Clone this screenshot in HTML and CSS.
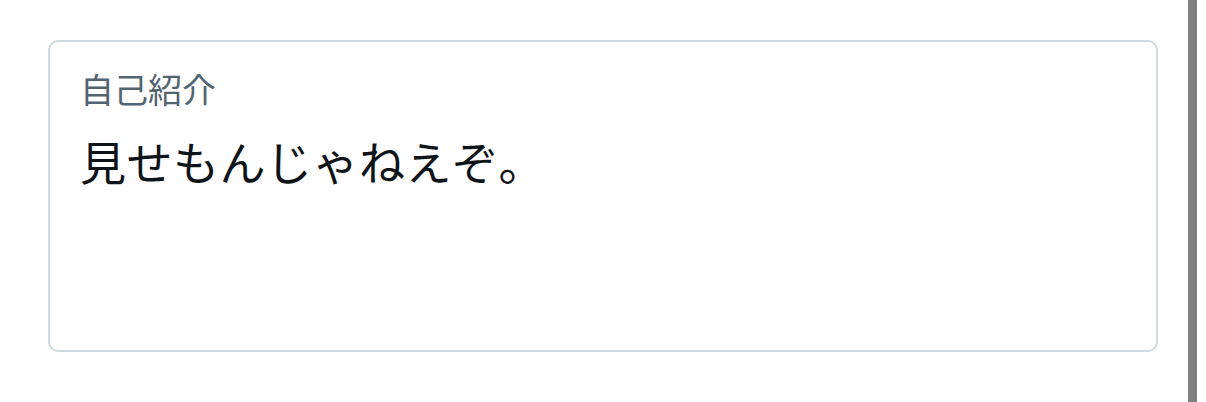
FILE: index.html
```html
<!DOCTYPE html>
<html lang="ja">
<head>
    <meta charset="UTF-8">
    <meta name="viewport" content="width=device-width, initial-scale=1.0">
    <title>プロフィール編集</title>
    <link rel="stylesheet" href="styles.css">
</head>
<body>
    <div class="page">
        <main class="content">
            <label class="field">
                <span class="field-label">自己紹介</span>
                <span class="field-value">見せもんじゃねえぞ。</span>
            </label>
        </main>
        <div class="scrollbar"></div>
    </div>
</body>
</html>
```

FILE: styles.css
```css
body {
    font-family: 'Noto Sans CJK JP', 'Noto Sans', sans-serif;
    margin: 0;
    padding: 0;
    background-color: #fff;
    color: #0f1419;
}

.page {
    display: flex;
    height: 402px;
}

.content {
    flex: 1;
    padding: 40px 30px 0 48px;
}

.field {
    display: flex;
    flex-direction: column;
    box-sizing: border-box;
    height: 312px;
    border: 2px solid #cfd9de;
    border-radius: 10px;
    padding: 27px 30px;
}

.field-label {
    font-size: 34px;
    line-height: 40px;
    color: #536471;
}

.field-value {
    margin-top: 23px;
    font-size: 46px;
    line-height: 56px;
    letter-spacing: 0.5px;
}

.scrollbar {
    width: 9px;
    margin-right: 9px;
    background-color: #808080;
}
```
